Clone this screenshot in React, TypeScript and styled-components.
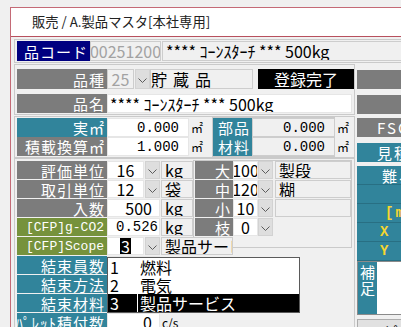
import React from 'react';
import styled, { createGlobalStyle } from 'styled-components';

const JP = `"Noto Sans CJK JP", "Noto Sans", sans-serif`;
const MONO = `"Liberation Mono", "DejaVu Sans Mono", "Noto Sans CJK JP", monospace`;

const tones = {
  navy: '#000080',
  gray: '#7c7c7c',
  teal: '#31849b',
  olive: '#76923c',
  black: '#000',
};
type Tone = keyof typeof tones;

const GlobalStyle = createGlobalStyle`
  html, body {
    margin: 0;
    padding: 0;
    background: #f0f0f0;
    overflow: hidden;
  }
  body {
    width: 401px;
    height: 327px;
    font-family: ${JP};
  }
`;

const Window = styled.div`
  box-sizing: border-box;
  margin: 7px 0 0 10px;
  width: 391px;
  height: 320px;
  border-left: 1px solid #c46a76;
  border-top: 1px solid #c46a76;
  overflow: hidden;
`;

const TitleBar = styled.div`
  height: 28px;
  background: #fff;
  border-bottom: 1px solid #b8505e;
  padding-left: 21px;
  font-size: 13.3px;
  line-height: 28px;
  color: #222;
  white-space: nowrap;
`;

const Form = styled.div`
  width: 440px;
  padding-left: 3px;
`;

const Panel = styled.div<{ $mt?: number; $pt?: number; $pb?: number; $gap?: number; $w?: number }>`
  box-sizing: border-box;
  width: ${p => p.$w ?? 341}px;
  margin-top: ${p => p.$mt ?? 0}px;
  padding: ${p => p.$pt ?? 1}px 2px ${p => p.$pb ?? 1}px;
  border: 1px solid #cacaca;
  display: flex;
  flex-direction: column;
  gap: ${p => p.$gap ?? 0}px;
`;

const Row = styled.div<{ $h?: number }>`
  position: relative;
  display: flex;
  align-items: stretch;
  height: ${p => p.$h ?? 18}px;
`;

const Label = styled.div<{ $tone: Tone; $w?: number; $mono?: boolean; $size?: number }>`
  flex: none;
  box-sizing: border-box;
  width: ${p => p.$w ?? 90}px;
  background: ${p => tones[p.$tone]};
  color: #fff;
  font-family: ${p => (p.$mono ? MONO : JP)};
  font-size: ${p => p.$size ?? (p.$mono ? 13 : 15)}px;
  letter-spacing: ${p => (p.$mono ? 0 : 1)}px;
  display: flex;
  align-items: center;
  justify-content: flex-end;
  padding-right: ${p => (p.$mono ? 3 : 2)}px;
  white-space: nowrap;
  line-height: 1;
`;

const Field = styled.div<{
  $w?: number;
  $ml?: number;
  $ro?: boolean;
  $muted?: boolean;
  $mono?: boolean;
  $align?: 'left' | 'center' | 'right';
  $pad?: number;
  $ls?: number;
}>`
  flex: ${p => (p.$w ? 'none' : '1')};
  box-sizing: border-box;
  width: ${p => (p.$w ? `${p.$w}px` : 'auto')};
  margin-left: ${p => p.$ml ?? 0}px;
  background: ${p => (p.$ro ? '#f0f0f0' : '#fff')};
  border: 1px solid ${p => (p.$ro ? '#cdcdcd' : '#e6e6e6')};
  color: ${p => (p.$muted ? '#a2a2a2' : '#000')};
  font-family: ${p => (p.$mono ? MONO : JP)};
  font-size: ${p => (p.$mono ? 14 : 16)}px;
  letter-spacing: ${p => p.$ls ?? 0}px;
  display: flex;
  align-items: center;
  justify-content: ${p => (p.$align === 'right' ? 'flex-end' : p.$align === 'center' ? 'center' : 'flex-start')};
  padding: 0 ${p => p.$pad ?? 3}px;
  white-space: nowrap;
  overflow: hidden;
  line-height: 1;
`;

const Status = styled.div`
  flex: none;
  width: 96px;
  margin-left: 5px;
  background: #000;
  color: #fff;
  font-size: 16px;
  display: flex;
  align-items: center;
  justify-content: center;
  line-height: 1;
`;

const DropBtn = styled.div<{ $ml?: number }>`
  flex: none;
  box-sizing: border-box;
  width: 15px;
  margin-left: ${p => p.$ml ?? 1}px;
  background: #dedede;
  border: 1px solid #d2d2d2;
  display: flex;
  align-items: center;
  justify-content: center;
  padding-top: 2px;
`;

const Unit = styled.div<{ $w?: number }>`
  flex: none;
  width: ${p => p.$w ?? 20}px;
  padding-left: 2px;
  font-size: 12px;
  display: flex;
  align-items: center;
  color: #000;
`;

const Selected = styled.span`
  background: #000;
  color: #fff;
  padding: 0 1px;
`;

const Body = styled.div`
  display: flex;
  align-items: flex-start;
`;

const Main = styled.div`
  flex: none;
  width: 341px;
`;

const Split = styled.div`
  display: flex;
  align-items: flex-start;
`;

const Stack = styled.div<{ $w: number; $gap?: number }>`
  flex: none;
  width: ${p => p.$w}px;
  display: flex;
  flex-direction: column;
  gap: ${p => p.$gap ?? 0}px;
`;

const SubGroup = styled.div`
  flex: none;
  width: 122px;
  margin: -1px 0;
  border: 1px solid #cacaca;
  border-right: none;
  display: flex;
  flex-direction: column;
`;

const SubPanel = styled.div`
  flex: 1;
  box-sizing: border-box;
  margin: -1px 0 -12px;
  padding: 0 0 11px 1px;
  border: 1px solid #cacaca;
  display: flex;
  flex-direction: column;
  gap: 1px;
`;

const DropList = styled.div`
  position: absolute;
  z-index: 5;
  top: 20px;
  left: 90px;
  width: 191px;
  background: #fff;
  border: 1px solid #5a5a5a;
  display: flex;
  flex-direction: column;
`;

const Option = styled.div<{ $active?: boolean }>`
  display: flex;
  height: 18px;
  gap: 1px;
  font-size: 16px;
  line-height: 18px;
  color: ${p => (p.$active ? '#fff' : '#000')};

  span {
    background: ${p => (p.$active ? '#000' : 'transparent')};
    padding-left: 2px;
    white-space: nowrap;
  }
  span:first-child {
    width: 27px;
  }
  span:last-child {
    flex: 1;
  }
`;

const RightCol = styled.div`
  flex: none;
  width: 90px;
  margin-left: 2px;
  display: flex;
  flex-direction: column;
`;

const SideCell = styled.div<{ $tone: Tone; $mt?: number; $pl?: number; $accent?: boolean }>`
  height: 19px;
  margin-top: ${p => p.$mt ?? 0}px;
  padding-left: ${p => p.$pl ?? 20}px;
  background: ${p => tones[p.$tone]};
  color: ${p => (p.$accent ? '#f5d630' : '#fff')};
  font-family: ${p => (p.$accent ? MONO : JP)};
  font-weight: ${p => (p.$accent ? 700 : 400)};
  font-size: ${p => (p.$accent ? 14 : 15)}px;
  letter-spacing: 2px;
  display: flex;
  align-items: center;
  white-space: nowrap;
  line-height: 1;
`;

const TealBlock = styled.div`
  margin-top: 4px;
  display: flex;
  flex-direction: column;

  & > div {
    box-sizing: border-box;
    border-bottom: 1px solid #286f83;
  }
`;

const NoteBox = styled.div`
  display: flex;
  height: 54px;
  border: 1px solid #8b8b8b;
  box-sizing: border-box;
`;

const NoteLabel = styled.div`
  width: 19px;
  background: ${tones.teal};
  color: #fff;
  font-size: 15px;
  line-height: 16px;
  text-align: center;
  padding-top: 2px;
`;

const NoteArea = styled.div`
  flex: 1;
  background: #fff;
`;

const SideButton = styled.div`
  margin-top: 4px;
  height: 22px;
  background: #e1e1e1;
  border: 1px solid #adadad;
  font-size: 14px;
  padding-left: 12px;
  line-height: 22px;
`;

const Chevron = () => (
  <svg width="9" height="5" viewBox="0 0 9 5">
    <polyline points="0.5,0.5 4.5,4.5 8.5,0.5" fill="none" stroke="#5c5c5c" strokeWidth="1" />
  </svg>
);

const App = () => {
  return (
    <>
      <GlobalStyle />
      <Window>
        <TitleBar>販売 / A.製品マスタ[本社専用]</TitleBar>
        <Form>
          <Panel $mt={2} $w={430}>
            <Row $h={20}>
              <Label $tone="navy" $w={73}>品コード</Label>
              <Field $w={71} $ro $muted $align="center">00251200</Field>
              <Field $w={300} $ml={1} $ro>**** ｺｰﾝｽﾀｰﾁ *** 500kg</Field>
            </Row>
          </Panel>
          <Body>
            <Main>
              <Panel $mt={1} $pt={4} $pb={1} $gap={5}>
                <Row $h={20}>
                  <Label $tone="gray">品種</Label>
                  <Field $w={27} $ro $muted $align="center">25</Field>
                  <DropBtn><Chevron /></DropBtn>
                  <Field $w={103} $ro $pad={0} $ls={6}>貯蔵品</Field>
                  <Status>登録完了</Status>
                </Row>
                <Row $h={19}>
                  <Label $tone="gray">品名</Label>
                  <Field $pad={2}>**** ｺｰﾝｽﾀｰﾁ *** 500kg</Field>
                </Row>
              </Panel>
              <Panel $mt={1}>
                <Split>
                  <Stack $w={195}>
                    <Row $h={19}>
                      <Label $tone="teal">実㎡</Label>
                      <Field $w={82} $mono $align="right" $pad={9}>0.000</Field>
                      <Unit>㎡</Unit>
                    </Row>
                    <Row $h={19}>
                      <Label $tone="gray">積載換算㎡</Label>
                      <Field $w={82} $mono $align="right" $pad={9}>1.000</Field>
                      <Unit>㎡</Unit>
                    </Row>
                  </Stack>
                  <SubGroup>
                    <Row $h={19}>
                      <Label $tone="teal" $w={39}>部品</Label>
                      <Field $ro $mono $align="right" $pad={9}>0.000</Field>
                    </Row>
                    <Row $h={19}>
                      <Label $tone="teal" $w={39}>材料</Label>
                      <Field $ro $mono $align="right" $pad={9}>0.000</Field>
                    </Row>
                  </SubGroup>
                  <Stack $w={18}>
                    <Row $h={19}><Unit>㎡</Unit></Row>
                    <Row $h={19}><Unit>㎡</Unit></Row>
                  </Stack>
                </Split>
              </Panel>
              <Panel $pt={2} $gap={1}>
                <Split>
                  <Stack $w={176} $gap={1}>
                    <Row>
                      <Label $tone="gray">評価単位</Label>
                      <Field $w={37} $align="center">16</Field>
                      <DropBtn><Chevron /></DropBtn>
                      <Field $w={32} $ml={1} $ro>kg</Field>
                    </Row>
                    <Row>
                      <Label $tone="gray">取引単位</Label>
                      <Field $w={37} $align="center">12</Field>
                      <DropBtn><Chevron /></DropBtn>
                      <Field $w={32} $ml={1} $ro>袋</Field>
                    </Row>
                    <Row>
                      <Label $tone="gray">入数</Label>
                      <Field $w={53} $align="right" $pad={7}>500</Field>
                      <Field $w={32} $ml={1} $ro>kg</Field>
                    </Row>
                    <Row>
                      <Label $tone="olive" $mono>[CFP]g-CO2</Label>
                      <Field $w={53} $mono $align="right" $pad={1}>0.526</Field>
                      <Field $w={32} $ml={1} $ro>kg</Field>
                    </Row>
                  </Stack>
                  <SubPanel>
                    <Row>
                      <Label $tone="gray" $w={38}>大</Label>
                      <Field $w={25} $pad={0} $align="center">100</Field>
                      <DropBtn $ml={0}><Chevron /></DropBtn>
                      <Field $ml={2} $ro>製段</Field>
                    </Row>
                    <Row>
                      <Label $tone="gray" $w={38}>中</Label>
                      <Field $w={25} $pad={0} $align="center">120</Field>
                      <DropBtn $ml={0}><Chevron /></DropBtn>
                      <Field $ml={2} $ro>糊</Field>
                    </Row>
                    <Row>
                      <Label $tone="gray" $w={38}>小</Label>
                      <Field $w={25} $pad={0} $align="center">10</Field>
                      <DropBtn $ml={0}><Chevron /></DropBtn>
                      <Field $ml={2} $ro />
                    </Row>
                    <Row>
                      <Label $tone="gray" $w={38}>枝</Label>
                      <Field $w={25} $pad={0} $align="center">0</Field>
                      <DropBtn $ml={0}><Chevron /></DropBtn>
                    </Row>
                  </SubPanel>
                </Split>
                <Row>
                  <Label $tone="olive" $mono>[CFP]Scope</Label>
                  <Field $w={37} $align="center"><Selected>3</Selected></Field>
                  <DropBtn><Chevron /></DropBtn>
                  <Field $w={72} $ml={1} $ro>製品サービス</Field>
                  <DropList>
                    <Option><span>1</span><span>燃料</span></Option>
                    <Option><span>2</span><span>電気</span></Option>
                    <Option $active><span>3</span><span>製品サービス</span></Option>
                  </DropList>
                </Row>
                <Row>
                  <Label $tone="teal">結束員数</Label>
                  <Field $w={53} />
                </Row>
                <Row>
                  <Label $tone="teal">結束方法</Label>
                  <Field $w={53} />
                </Row>
                <Row>
                  <Label $tone="teal">結束材料</Label>
                  <Field $w={53} />
                </Row>
                <Row>
                  <Label $tone="teal">ﾊﾟﾚｯﾄ積付数</Label>
                  <Field $w={53} $align="right" $pad={7}>0</Field>
                  <Unit $w={30}>c/s</Unit>
                </Row>
              </Panel>
            </Main>
            <RightCol>
              <SideCell $tone="gray" $mt={7} />
              <SideCell $tone="gray" $mt={6} />
              <SideCell $tone="gray" $mt={4}>FSC認証</SideCell>
              <SideCell $tone="teal" $mt={6}>見積区分</SideCell>
              <TealBlock>
                <SideCell $tone="teal" $pl={25}>難易度</SideCell>
                <SideCell $tone="teal" />
                <SideCell $tone="teal" $pl={28} $accent>[mm]</SideCell>
                <SideCell $tone="teal" $pl={23} $accent>X</SideCell>
                <SideCell $tone="teal" $pl={23} $accent>Y</SideCell>
              </TealBlock>
              <NoteBox>
                <NoteLabel>補<br />足</NoteLabel>
                <NoteArea />
              </NoteBox>
              <SideButton>コピー</SideButton>
            </RightCol>
          </Body>
        </Form>
      </Window>
    </>
  );
};

export default App;
